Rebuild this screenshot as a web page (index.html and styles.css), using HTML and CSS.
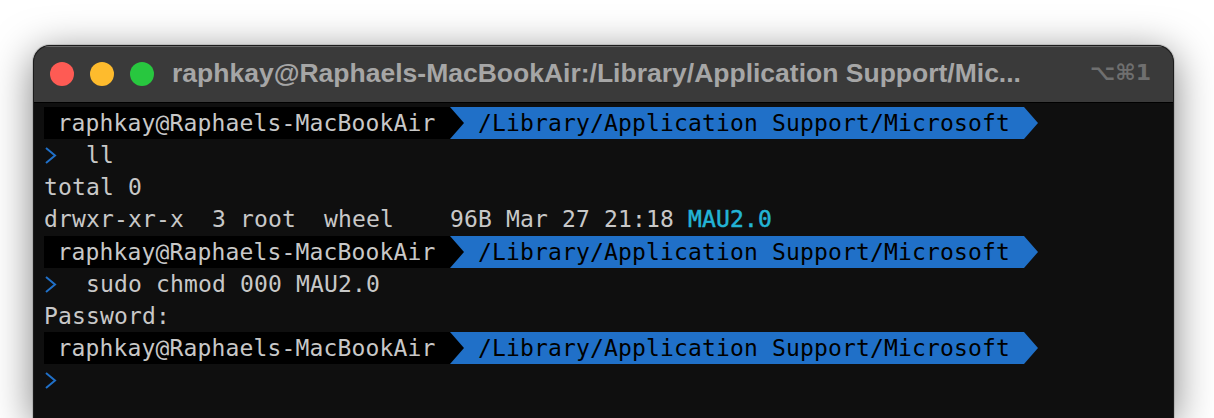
FILE: index.html
```html
<!DOCTYPE html>
<html lang="en">
<head>
<meta charset="utf-8">
<title>Terminal</title>
<link rel="stylesheet" href="styles.css">
</head>
<body>
<main class="window">
  <header class="titlebar">
    <div class="lights">
      <span class="light light-close"></span>
      <span class="light light-min"></span>
      <span class="light light-max"></span>
    </div>
    <div class="title">raphkay@Raphaels-MacBookAir:/Library/Application Support/Mic...</div>
    <div class="shortcut">⌥⌘1</div>
  </header>
  <section class="terminal">
    <div class="row banner">
      <span class="seg-host">raphkay@Raphaels-MacBookAir</span>
      <span class="seg-path">/Library/Application Support/Microsoft</span>
      <svg class="arrow-end" viewBox="0 0 14 32"><path d="M0 0L14 16L0 32Z"/></svg>
    </div>
    <div class="row"><svg class="chevron" viewBox="0 0 14 32"><path d="M2 9L11 16.5L2 24"/></svg><span class="cmd">ll</span></div>
    <div class="row">total 0</div>
    <div class="row">drwxr-xr-x  3 root  wheel    96B Mar 27 21:18 <span class="dir">MAU2.0</span></div>
    <div class="row banner">
      <span class="seg-host">raphkay@Raphaels-MacBookAir</span>
      <span class="seg-path">/Library/Application Support/Microsoft</span>
      <svg class="arrow-end" viewBox="0 0 14 32"><path d="M0 0L14 16L0 32Z"/></svg>
    </div>
    <div class="row"><svg class="chevron" viewBox="0 0 14 32"><path d="M2 9L11 16.5L2 24"/></svg><span class="cmd">sudo chmod 000 MAU2.0</span></div>
    <div class="row">Password:</div>
    <div class="row banner">
      <span class="seg-host">raphkay@Raphaels-MacBookAir</span>
      <span class="seg-path">/Library/Application Support/Microsoft</span>
      <svg class="arrow-end" viewBox="0 0 14 32"><path d="M0 0L14 16L0 32Z"/></svg>
    </div>
    <div class="row"><svg class="chevron" viewBox="0 0 14 32"><path d="M2 9L11 16.5L2 24"/></svg></div>
  </section>
</main>
</body>
</html>
```
FILE: styles.css
```css
* { box-sizing: border-box; }
html, body { margin: 0; height: 418px; overflow: hidden; background: #fff; }
body { padding: 45px 40px 0 33px; }
.window {
  height: 373px;
  border: 1px solid #1c1c1c;
  border-bottom: 0;
  border-radius: 17px 17px 0 0;
  background: #0f0f0f;
  box-shadow: 0 0 0 1px rgba(110,110,110,.25), 0 8px 40px rgba(0,0,0,.5);
  overflow: hidden;
}
.titlebar {
  height: 57px;
  display: flex;
  align-items: center;
  background: #3a3a3a;
  border-top: 1px solid #6b6b6b;
  border-bottom: 1px solid #000;
  padding: 0 22px 1px 16px;
}
.lights { display: flex; gap: 16px; }
.light { width: 24px; height: 24px; border-radius: 50%; }
.light-close { background: #fe5b54; }
.light-min { background: #febb2d; }
.light-max { background: #28c73f; }
.title {
  margin-left: 18px;
  margin-top: -2px;
  flex: 1;
  font: 700 26.5px "Liberation Sans", Arial, sans-serif;
  color: #a6a6a6;
  white-space: nowrap;
}
.shortcut {
  font: 700 22px "DejaVu Sans", sans-serif;
  color: #6f6f6f;
  white-space: nowrap;
  margin-top: -4px;
}
.terminal {
  padding: 4px 0 0 10px;
  font: 23px "DejaVu Sans Mono", monospace;
  letter-spacing: 0.155px;
  color: #c8c8c8;
}
.row {
  height: 32.14px;
  line-height: 32px;
  white-space: pre;
  display: flex;
}
.row > * { flex: none; }
.seg-host {
  background: #000;
  padding: 0 0 0 13.5px;
  width: 406px;
}
.seg-path {
  background: #2070c8;
  color: #000;
  width: 574px;
  padding-left: 28px;
  position: relative;
}
.seg-path::before {
  content: "";
  position: absolute;
  left: 0;
  top: 0;
  border-left: 14px solid #000;
  border-top: 16px solid transparent;
  border-bottom: 16px solid transparent;
}
.arrow-end { width: 14px; height: 32px; fill: #2070c8; }
.chevron { width: 14px; height: 32px; fill: none; stroke: #2070c8; stroke-width: 2; }
.cmd { margin-left: 28px; }
.dir { color: #23b4d6; -webkit-text-stroke: 0.5px #23b4d6; }
```
